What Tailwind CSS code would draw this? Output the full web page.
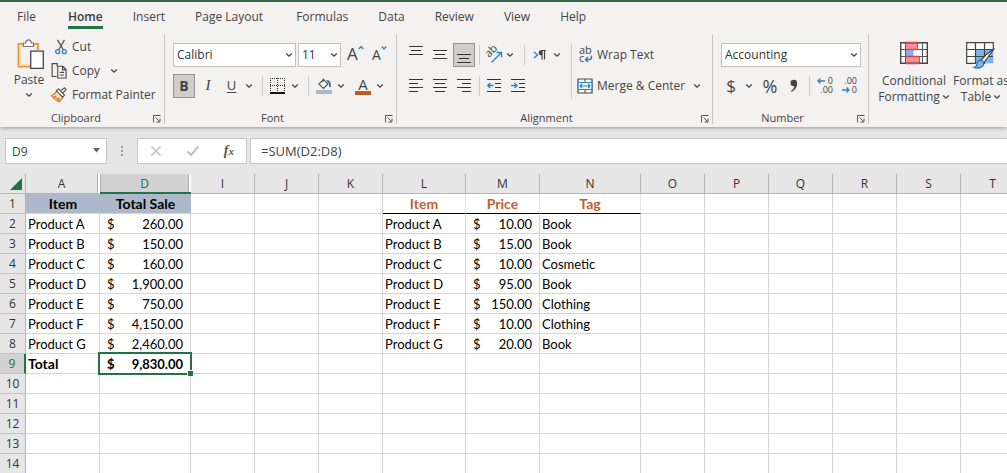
<!DOCTYPE html>
<html lang="en">
<head>
<meta charset="utf-8">
<title>Spreadsheet</title>
<script src="https://cdn.jsdelivr.net/npm/@tailwindcss/browser@4"></script>
</head>
<body class="flex h-screen flex-col overflow-hidden bg-[#e6e6e6] font-['Open_Sans',sans-serif] text-xs text-[#444444]">
<svg class="hidden">
  <symbol id="chev" viewBox="0 0 8 6"><path d="M1.200 1.500 4 4.200 6.800 1.500" fill="none" stroke="#444" stroke-width="1.300"/></symbol>
  <symbol id="launch" viewBox="0 0 9 9"><path d="M1.500 8.500V1.500H8.500M3.500 3.500 7.500 7.500M8 4.500V8H4.500" fill="none" stroke="#555" stroke-width="1"/></symbol>
</svg>

<header class="shrink-0 border-t-2 border-[#3a6549] bg-[#f3f2f1] shadow-[0_1px_4px_rgba(0,0,0,0.35)]">
  <nav class="flex h-[33px] items-start gap-[30px] pl-[17px] pt-1.5 leading-[18px]">
    <button class="mr-0.5">File</button>
    <button class="relative font-semibold text-[#3b3b3b]">Home<span class="absolute inset-x-0 top-[18px] h-[3px] bg-[#217346]"></span></button>
    <button>Insert</button>
    <button class="mr-[3px]">Page Layout</button>
    <button>Formulas</button>
    <button>Data</button>
    <button>Review</button>
    <button>View</button>
    <button>Help</button>
  </nav>

  <div class="flex h-[92px] whitespace-nowrap">
    <!-- Clipboard -->
    <section class="mb-[3px] flex w-[165px] shrink-0 flex-col border-r border-[#c6c4c2]">
      <div class="flex h-[78px]">
        <button class="flex w-[54px] flex-col items-center self-start pl-1 pt-1">
          <svg class="ml-1 h-8 w-7" viewBox="0 0 28 32"><path d="M6 5H1.500V27.500H13M17 5H21V11" fill="none" stroke="#e8962e" stroke-width="1.800"/><path d="M3 6.500H6M3 7V26H12M17 6.500H19V11" fill="none" stroke="#fbdcae" stroke-width="1.300"/><path d="M6.500 7.500V4H8.500Q9 .8 11.500 .8T14.500 4H16.500V7.500Z" fill="#fff" stroke="#777" stroke-width="1.200"/><path d="M13.700 12.200H26.300V29.300H13.700Z" fill="#fff" stroke="#444" stroke-width="1.300"/></svg>
          <span class="leading-[18px]">Paste</span>
          <svg class="mt-[3px] h-1.5 w-2"><use href="#chev"/></svg>
        </button>
        <div class="flex flex-col">
          <button class="flex h-6 items-center gap-1"><svg class="h-4 w-[14px]" viewBox="0 0 14 16"><path d="M3.500 .8 9.500 11M10.500 .8 4.500 11" fill="none" stroke="#555" stroke-width="1.300"/><circle cx="3.700" cy="12.700" r="2" fill="none" stroke="#2e83c0" stroke-width="1.300"/><circle cx="10.300" cy="12.700" r="2" fill="none" stroke="#2e83c0" stroke-width="1.300"/></svg>Cut</button>
          <button class="flex h-6 items-center gap-1"><svg class="-ml-1 h-4 w-[18px]" viewBox="0 0 18 17"><path d="M7 3.500V.700H1.700V14.300H6.500" fill="none" stroke="#444" stroke-width="1.200"/><path d="M7.700 3.500H13L16.500 7V16H7.700ZM12.700 3.500V7.300H16.500M9.700 10H14.500M9.700 12.700H14.500" fill="#fff" stroke="#444" stroke-width="1.200"/></svg>Copy<svg class="ml-1.5 h-1.5 w-2"><use href="#chev"/></svg></button>
          <button class="flex h-6 items-center gap-1"><svg class="-ml-1 h-4 w-[18px]" viewBox="0 0 18 16"><path d="M7 3.500 13 10 9.500 14.800Q4 12.500 1.500 8.500Q5 7.500 7 3.500Z" fill="#fbe3c8" stroke="#d9822b" stroke-width="1.300"/><path d="M3 9 6.500 8.500 6 11.500 9.500 10.500 9.500 14.500Z" fill="#e07a1f"/><path d="M6.500 3.800 8.500 1.800 14.500 8.200 12.500 10.200ZM10.500 4 14.500 .8 16 2.300 12.800 6.200" fill="#fff" stroke="#555" stroke-width="1.200"/></svg>Format Painter</button>
        </div>
      </div>
      <div class="flex h-[11px] items-center"><span class="flex-1 text-center text-[11px]">Clipboard</span><button class="mr-[3px]" aria-label="Clipboard settings"><svg class="h-[9px] w-[9px]"><use href="#launch"/></svg></button></div>
    </section>

    <!-- Font -->
    <section class="mb-[3px] flex w-[232px] shrink-0 flex-col border-r border-[#c6c4c2] pl-2">
      <div class="flex h-[78px] flex-col gap-[7px] pt-2">
        <div class="flex h-6 shrink-0 gap-[2px]">
          <label class="relative block"><select aria-label="Font name" class="h-6 w-[123px] appearance-none border border-[#c3c1bf] bg-white pl-[3px] leading-5 text-[#333]"><option>Calibri</option></select><svg class="pointer-events-none absolute right-[3px] top-[9px] h-1.5 w-2"><use href="#chev"/></svg></label>
          <label class="relative block"><select aria-label="Font size" class="h-6 w-[43px] appearance-none border border-[#c3c1bf] bg-white pl-[3px] leading-5 text-[#333]"><option>11</option></select><svg class="pointer-events-none absolute right-[3px] top-[9px] h-1.5 w-2"><use href="#chev"/></svg></label>
          <button class="ml-1 flex w-5 text-[17px] leading-[22px]" aria-label="Increase font size">A<svg class="mt-0.5 h-1.5 w-1.5" viewBox="0 0 6 6"><path d="M.8 4 3 1.500 5.200 4" fill="none" stroke="#2e83c0" stroke-width="1.300"/></svg></button>
          <button class="ml-[3px] flex w-5 text-sm leading-6" aria-label="Decrease font size">A<svg class="mt-0.5 h-1.5 w-1.5" viewBox="0 0 6 6"><path d="M.8 1.500 3 4 5.200 1.500" fill="none" stroke="#2e83c0" stroke-width="1.300"/></svg></button>
        </div>
        <div class="flex h-6 shrink-0 items-center text-[13px]">
          <button class="h-6 w-[22px] border border-[#959391] bg-[#cfcdcb] text-sm font-bold leading-5">B</button>
          <button class="w-[26px] font-['Liberation_Serif',serif] text-[15px] italic">I</button>
          <button class="w-[21px] underline underline-offset-2">U</button>
          <button class="flex w-[14px] justify-center" aria-label="Underline style"><svg class="h-1.5 w-2"><use href="#chev"/></svg></button>
          <span class="flex w-3 justify-center"><span class="h-5 w-px bg-[#d0cecc]"></span></span>
          <button class="flex w-5 justify-center" aria-label="Borders"><svg class="h-4 w-4" viewBox="0 0 16 16"><path d="M0 .5H16M0 7.500H16M.5 0V14M7.500 0V14M14.500 0V14" fill="none" stroke="#333" stroke-dasharray="1 1"/><path d="M0 15H15" stroke="#111" stroke-width="2"/></svg></button>
          <button class="flex w-[14px] justify-center" aria-label="Border options"><svg class="h-1.5 w-2"><use href="#chev"/></svg></button>
          <span class="flex w-3 justify-center"><span class="h-5 w-px bg-[#d0cecc]"></span></span>
          <button class="flex w-5 justify-center" aria-label="Fill color"><svg class="h-[18px] w-4" viewBox="0 0 16 18"><path d="M0 13H16V17H0Z" fill="#adb9ca"/><path d="M7 1.500V5M7.500 2.500 12 7 7.500 11.500 3 7Z" fill="#fff" stroke="#555" stroke-width="1.200"/><path d="M11 3.500Q14.500 4.500 14 10" fill="none" stroke="#2f6d94" stroke-width="1.800"/></svg></button>
          <button class="flex w-[14px] justify-center" aria-label="Fill options"><svg class="h-1.5 w-2"><use href="#chev"/></svg></button>
          <button class="ml-[5px] flex w-5 flex-col items-center" aria-label="Font color"><span class="h-[13px] text-[15px] leading-[12px]">A</span><span class="h-1 w-4 bg-[#c05a1f]"></span></button>
          <button class="flex w-[14px] justify-center" aria-label="Font color options"><svg class="h-1.5 w-2"><use href="#chev"/></svg></button>
        </div>
      </div>
      <div class="flex h-[11px] items-center"><span class="flex-1 pr-3 text-center text-[11px]">Font</span><button class="mr-[3px]" aria-label="Font settings"><svg class="h-[9px] w-[9px]"><use href="#launch"/></svg></button></div>
    </section>

    <!-- Alignment -->
    <section class="mb-[3px] flex w-[316px] shrink-0 flex-col border-r border-[#c6c4c2]">
      <div class="flex h-[78px] pt-2">
        <div class="flex w-[174px] shrink-0 flex-col gap-[7px] pl-2">
          <div class="flex h-6 items-center">
            <button class="mr-0.5 flex h-6 w-[22px] items-center justify-center" aria-label="Top align"><svg class="h-[18px] w-[14px]" viewBox="0 0 14 18"><path d="M0 .5H14M2 4.500H12M0 8.500H14" stroke="#333"/></svg></button>
            <button class="mr-0.5 flex h-6 w-[22px] items-center justify-center" aria-label="Middle align"><svg class="h-[18px] w-[14px]" viewBox="0 0 14 18"><path d="M0 4.500H14M2 8.500H12M0 12.500H14" stroke="#333"/></svg></button>
            <button class="flex h-6 w-[22px] items-center justify-center border border-[#959391] bg-[#cfcdcb]" aria-label="Bottom align"><svg class="h-[18px] w-[14px]" viewBox="0 0 14 18"><path d="M0 8.500H14M2 12.500H12M0 16.500H14" stroke="#333"/></svg></button>
            <span class="flex w-2 justify-center"><span class="h-5 w-px bg-[#d0cecc]"></span></span>
            <button class="flex w-[22px] justify-center" aria-label="Orientation"><svg class="h-[18px] w-[18px] overflow-visible" viewBox="0 0 18 18"><text x="4" y="12" transform="rotate(-45 4 12)" font-family="Open Sans, sans-serif" font-size="11" fill="#444">ab</text><path d="M6.500 16.500 16 7M11.500 6.500H16.500V11.500" fill="none" stroke="#2e83c0" stroke-width="1.300"/></svg></button>
            <button class="flex w-[10px] justify-center" aria-label="Orientation options"><svg class="h-1.5 w-2"><use href="#chev"/></svg></button>
            <span class="flex w-[18px] justify-center"><span class="h-5 w-px bg-[#d0cecc]"></span></span>
            <button class="w-[14px]" aria-label="Text direction"><svg class="h-[14px] w-[14px]" viewBox="0 0 14 14"><path d="M1 4 4.500 7 1 10" fill="none" stroke="#2e83c0" stroke-width="1.500"/><path d="M9 2.500V11.500M11.500 2.500V11.500M8 2.500H13" stroke="#444" stroke-width="1.200"/><path d="M9 2Q5.700 2 5.700 4.700T9 7.300Z" fill="#444"/></svg></button>
            <button class="flex w-5 justify-center" aria-label="Text direction options"><svg class="h-1.5 w-2"><use href="#chev"/></svg></button>
          </div>
          <div class="flex h-6 items-center">
            <button class="mr-0.5 flex w-[22px] justify-center" aria-label="Align left"><svg class="h-4 w-[14px]" viewBox="0 0 14 16"><path d="M0 1.500H14M0 5.500H9M0 9.500H14M0 13.500H9" stroke="#333"/></svg></button>
            <button class="mr-0.5 flex w-[22px] justify-center" aria-label="Center"><svg class="h-4 w-[14px]" viewBox="0 0 14 16"><path d="M0 1.500H14M2 5.500H12M0 9.500H14M2 13.500H12" stroke="#333"/></svg></button>
            <button class="flex w-[22px] justify-center" aria-label="Align right"><svg class="h-4 w-[14px]" viewBox="0 0 14 16"><path d="M0 1.500H14M5 5.500H14M0 9.500H14M5 13.500H14" stroke="#333"/></svg></button>
            <span class="flex w-2 justify-center"><span class="h-5 w-px bg-[#d0cecc]"></span></span>
            <button class="mr-0.5 flex w-[22px] justify-center" aria-label="Decrease indent"><svg class="h-4 w-[14px]" viewBox="0 0 14 16"><path d="M0 1.500H14M8 5.500H14M8 9.500H14M0 13.500H14" stroke="#333"/><path d="M6.500 7.500H.8M3.200 5 .8 7.500 3.200 10" fill="none" stroke="#2e83c0" stroke-width="1.400"/></svg></button>
            <button class="flex w-[22px] justify-center" aria-label="Increase indent"><svg class="h-4 w-[14px]" viewBox="0 0 14 16"><path d="M0 1.500H14M8 5.500H14M8 9.500H14M0 13.500H14" stroke="#333"/><path d="M0 7.500H6M3.500 5 6 7.500 3.500 10" fill="none" stroke="#2e83c0" stroke-width="1.400"/></svg></button>
          </div>
        </div>
        <div class="flex h-14 flex-col gap-[7px] border-l border-[#d0cecc] pl-[5px]">
          <button class="flex h-6 items-center gap-1"><svg class="h-[18px] w-4 overflow-visible" viewBox="0 0 16 18"><text x="2" y="8" font-family="Open Sans, sans-serif" font-size="11" fill="#444">ab</text><text x="2" y="16" font-family="Open Sans, sans-serif" font-size="11" fill="#444">c</text><path d="M14.500 9.500V11Q14.500 13.500 12 13.500H8.500M11 11 8.500 13.500 11 16" fill="none" stroke="#2e83c0" stroke-width="1.500"/></svg>Wrap Text</button>
          <button class="flex h-6 items-center gap-1"><svg class="h-4 w-4" viewBox="0 0 16 16"><path d="M1 1H15V15H1Z" fill="#fff" stroke="#444" stroke-width="1.200"/><path d="M8 1V4M8 12V15" stroke="#444"/><path d="M1 4.500H15V11.500H1Z" fill="#eef6fc" stroke="#2e83c0" stroke-width="1.200"/><path d="M3 8H13M5 6 3 8 5 10M11 6 13 8 11 10" fill="none" stroke="#2e83c0" stroke-width="1.200"/></svg>Merge &amp; Center<svg class="ml-1 h-1.5 w-2"><use href="#chev"/></svg></button>
        </div>
      </div>
      <div class="flex h-[11px] items-center"><span class="flex-1 pr-1 text-center text-[11px]">Alignment</span><button class="mr-[3px]" aria-label="Alignment settings"><svg class="h-[9px] w-[9px]"><use href="#launch"/></svg></button></div>
    </section>

    <!-- Number -->
    <section class="mb-[3px] flex w-[156px] shrink-0 flex-col border-r border-[#c6c4c2] pl-2">
      <div class="flex h-[78px] flex-col gap-[7px] pt-2">
        <label class="relative block h-6 w-[140px] shrink-0"><select aria-label="Number format" class="h-6 w-full appearance-none border border-[#c3c1bf] bg-white pl-[3px] leading-5 text-[#333]"><option>Accounting</option></select><svg class="pointer-events-none absolute right-[3px] top-[9px] h-1.5 w-2"><use href="#chev"/></svg></label>
        <div class="flex h-6 shrink-0 items-center">
          <button class="w-5 text-[17px] leading-[22px]">$</button>
          <button class="flex w-4 justify-center" aria-label="Currency options"><svg class="h-1.5 w-2"><use href="#chev"/></svg></button>
          <button class="w-[26px] text-[18px] leading-[22px]">%</button>
          <button class="flex w-[22px] justify-center" aria-label="Comma style"><svg class="h-[14px] w-2" viewBox="0 0 8 14"><circle cx="3.800" cy="4" r="3.300" fill="#444"/><path d="M7.100 4Q7.500 9.500 1.500 13L1 12Q4.500 9.500 4.500 6Z" fill="#444"/></svg></button>
          <span class="flex w-2 justify-center"><span class="h-5 w-px bg-[#d0cecc]"></span></span>
          <button class="flex w-6 justify-center" aria-label="Increase decimal"><svg class="h-[18px] w-[18px] overflow-visible" viewBox="0 0 18 18"><g font-family="Open Sans, sans-serif" font-size="9" fill="#444" text-anchor="end"><text x="17" y="7">0</text><text x="17" y="16">.00</text></g><path d="M9 4H2M4.500 1.500 2 4 4.500 6.500" fill="none" stroke="#2e83c0" stroke-width="1.400"/></svg></button>
          <button class="flex w-6 justify-center" aria-label="Decrease decimal"><svg class="h-[18px] w-[18px] overflow-visible" viewBox="0 0 18 18"><g font-family="Open Sans, sans-serif" font-size="9" fill="#444" text-anchor="end"><text x="17" y="7">.00</text><text x="17" y="16">0</text></g><path d="M2 13H9M6.500 10.500 9 13 6.500 15.500" fill="none" stroke="#2e83c0" stroke-width="1.400"/></svg></button>
        </div>
      </div>
      <div class="flex h-[11px] items-center"><span class="flex-1 pr-3 text-center text-[11px]">Number</span><button class="mr-[3px]" aria-label="Number settings"><svg class="h-[9px] w-[9px]"><use href="#launch"/></svg></button></div>
    </section>

    <!-- Styles -->
    <section class="flex items-start gap-1 pl-2 pt-1.5 leading-4">
      <button class="flex w-[74px] flex-col items-center">
        <svg class="mb-0.5 h-[30px] w-7" viewBox="0 0 28 30"><path d="M.7 1.700H27.300V22.300H.700Z" fill="#fff"/><path d="M5.500 1.700H17.500V8.500H5.500ZM5.500 15.500H19.500V22.300H5.500Z" fill="#ff8f94"/><path d="M5.500 9H13.500V15H5.500Z" fill="#79b4ea"/><path d="M5.500 1V23M22.500 1V23M1 8.500H27M1 15.500H27" stroke="#555"/><path d="M17.500 2V8.500M19.500 15.500V22" stroke="#d64550"/><path d="M.7 1.700H27.300V22.300H.700Z" fill="none" stroke="#444" stroke-width="1.400"/><path d="M5.500 1.500H17.500M5.500 8.500H17.500M5.500 15.500H19.500M5.500 22.500H19.500" stroke="#d64550" stroke-width="1.300"/></svg>
        <span>Conditional</span><span class="flex items-center gap-0.5">Formatting<svg class="h-1.5 w-2"><use href="#chev"/></svg></span>
      </button>
      <button class="flex w-[52px] flex-col items-center">
        <svg class="mb-0.5 h-[30px] w-[30px]" viewBox="0 0 30 30"><path d="M.7 1.700H27.300V22.300H.700Z" fill="#fff"/><path d="M9.500 8.500H27.300V22.300H9.500Z" fill="#79b4ea"/><path d="M9.500 1V23M18.500 1V23M1 8.500H27M1 15.500H27M27.300 8V1.700H.700V22.300H10" fill="none" stroke="#444" stroke-width="1.200"/><path d="M28.500 7.500 17.500 22 14.500 19.500Q20 13 28.500 7.500Z" fill="#fff" stroke="#444" stroke-width="1.200"/><path d="M14.500 19Q18.500 20 17.500 24Q14.500 28.500 8 26.500Q11 25.500 11 22.500Q11.500 19.500 14.500 19Z" fill="#79b4ea" stroke="#2b6ca8" stroke-width="1.200"/></svg>
        <span>Format as</span><span class="flex items-center gap-0.5">Table<svg class="h-1.5 w-2"><use href="#chev"/></svg></span>
      </button>
    </section>
  </div>
</header>

<!-- Formula bar -->
<div class="flex h-[47px] shrink-0 pl-[5px] pt-[11px]">
  <label class="relative block h-[26px] w-[102px]"><input aria-label="Name box" value="D9" class="h-full w-full border border-[#c6c6c6] bg-white pl-1.5"><svg class="absolute right-[7px] top-[10px] h-[5px] w-[7px]" viewBox="0 0 7 5"><path d="M0 0H7L3.500 4.500Z" fill="#666"/></svg></label>
  <svg class="mx-[13px] mt-[7px] h-3 w-1" viewBox="0 0 4 12"><path d="M1 1h2v2H1zM1 5h2v2H1zM1 9h2v2H1z" fill="#999"/></svg>
  <div class="flex h-[26px] w-[110px] items-center justify-around border border-[#c6c6c6] bg-white">
    <button aria-label="Cancel"><svg class="h-3 w-3" viewBox="0 0 12 12"><path d="M1.500 1.500 10.500 10.500M10.500 1.500 1.500 10.500" stroke="#c2c2c2" stroke-width="1.600"/></svg></button>
    <button aria-label="Enter"><svg class="h-3 w-[14px]" viewBox="0 0 14 12"><path d="M1.500 6.500 5 10 12.500 1.500" fill="none" stroke="#c2c2c2" stroke-width="2"/></svg></button>
    <button class="font-['Liberation_Serif',serif] text-sm font-bold italic leading-5 text-[#555]">f<span class="text-[11px]">x</span></button>
  </div>
  <input aria-label="Formula" value="=SUM(D2:D8)" class="ml-[3px] h-[26px] min-w-0 flex-1 border border-r-0 border-[#c6c6c6] bg-white pl-2.5 text-[13px]">
</div>

<!-- Sheet -->
<main class="min-h-0 flex-1 overflow-hidden bg-white">
  <table class="w-[1025px] table-fixed border-separate border-spacing-0 font-['Lato',sans-serif] text-[13px] leading-[18px] text-black">
    <colgroup id="cols"></colgroup>
    <thead><tr id="letters" class="h-5 bg-[#e6e6e6] font-['Open_Sans',sans-serif] text-xs leading-[19px] text-[#333]"></tr></thead>
    <tbody id="rows"></tbody>
  </table>
</main>

<script>
const columns = [['A',74],['D',91],['I',64],['J',64],['K',64],['L',83],['M',74],['N',101],['O',64],['P',64],['Q',64],['R',64],['S',64],['T',64]];
const sales = ['260.00','150.00','160.00','1,900.00','750.00','4,150.00','2,460.00'];
const prices = ['10.00','15.00','10.00','95.00','150.00','10.00','20.00'];
const tags = ['Book','Book','Cosmetic','Book','Clothing','Clothing','Book'];
const money = v => `<div class="flex justify-between px-[7px]"><span>$</span><span>${v}</span></div>`;
const grid = 'border-r border-b border-[#d4d4d4] p-0 pl-[2px] pt-px';
const amount = 'border-r border-b border-[#d4d4d4] p-0 pt-px';

document.getElementById('cols').innerHTML = '<col style="width:26px">' + columns.map(c => `<col style="width:${c[1]}px">`).join('');
document.getElementById('letters').innerHTML =
  '<th class="border-r border-b border-[#b5b5b5] p-0" aria-label="Select all"><svg class="ml-auto mr-[3px] h-3 w-3" viewBox="0 0 12 12"><path d="M12 0V12H0Z" fill="#217346"/></svg></th>' +
  columns.map(([c]) => c === 'D'
    ? '<th class="border-b-2 border-[#217346] bg-white p-0 font-normal text-[#217346]"><div class="mr-[2px] h-[18px] border-x border-[#b0b0b0] bg-[#d2d2d2] leading-[19px]">D</div></th>'
    : c === 'A'
    ? '<th class="border-r-2 border-b border-r-white border-b-[#b5b5b5] p-0 font-normal"><div class="border-r border-[#b0b0b0]">A</div></th>'
    : `<th class="border-r border-b border-[#b5b5b5] p-0 font-normal">${c}</th>`).join('');

function cell(c, r) {
  if (r === 1) {
    if (c === 'A') return '<td class="border-b border-[#d4d4d4] bg-[#adb9ca] p-0 pt-px text-center text-sm leading-[18px] font-bold">Item</td>';
    if (c === 'D') return '<td class="border-b border-[#d4d4d4] bg-[#adb9ca] p-0 pt-px text-center text-sm leading-[18px] font-bold">Total Sale</td>';
    const head = {L: 'Item', M: 'Price', N: 'Tag'}[c];
    if (head) return `<td class="border-r border-b border-r-[#e4e4e4] border-b-black p-0 pt-px text-center text-sm leading-[18px] font-bold text-[#c0622f]">${head}</td>`;
  }
  if (r >= 2 && r <= 8) {
    const i = r - 2;
    if (c === 'A' || c === 'L') return `<td class="${grid}">Product ${'ABCDEFG'[i]}</td>`;
    if (c === 'D') return `<td class="${amount}">${money(sales[i])}</td>`;
    if (c === 'M') return `<td class="${amount}">${money(prices[i])}</td>`;
    if (c === 'N') return `<td class="${grid}">${tags[i]}</td>`;
  }
  if (r === 9 && c === 'A') return `<td class="${grid} text-sm leading-[18px] font-bold">Total</td>`;
  if (r === 9 && c === 'D') return `<td class="${amount} relative font-bold">${money('9,830.00')}<span class="absolute -inset-x-[2px] -top-[2px] -bottom-[2px] border-2 border-[#217346]"></span><span class="absolute -right-[3px] -bottom-[3px] h-[6px] w-[6px] border-t border-l border-white bg-[#217346]"></span></td>`;
  return `<td class="${grid}"></td>`;
}
let html = '';
for (let r = 1; r <= 14; r++) {
  const th = r === 9
    ? '<th class="border-r-2 border-b border-r-[#217346] border-b-[#c4c4c4] bg-[#d2d2d2] p-0 pt-px font-[\'Open_Sans\',sans-serif] text-xs leading-[18px] font-normal text-[#217346]">'
    : '<th class="border-r border-b border-r-[#b5b5b5] border-b-[#c4c4c4] bg-[#e6e6e6] p-0 pt-px font-[\'Open_Sans\',sans-serif] text-xs leading-[18px] font-normal text-[#333]">';
  html += `<tr class="h-5">${th}${r}</th>${columns.map(c => cell(c[0], r)).join('')}</tr>`;
}
document.getElementById('rows').innerHTML = html;
</script>
</body>
</html>
